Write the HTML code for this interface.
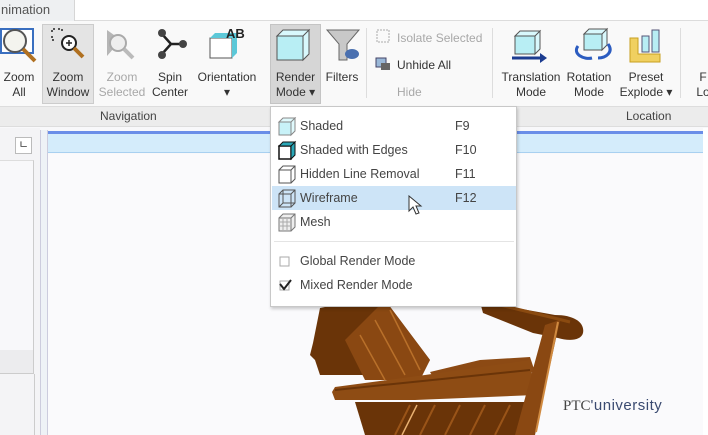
<!DOCTYPE html>
<html><head><meta charset="utf-8"><style>
*{margin:0;padding:0;box-sizing:border-box}
body{width:708px;height:435px;overflow:hidden;background:#f8f8fa;font-family:"Liberation Sans",sans-serif;font-size:12px;color:#333;position:relative}
.a{position:absolute}
.lbl{position:absolute;text-align:center;font-size:12px;line-height:15px;color:#333}
.dis{color:#a8a8a8}
.mi{position:absolute;left:0;width:246px;height:24px;font-size:12.5px;line-height:24px;color:#444}
.mi .t{position:absolute;left:29px}
.mi .k{position:absolute;left:184px}
</style></head><body>
<div class="a" style="left:0;top:0;width:708px;height:21px;background:#fff;border-bottom:1px solid #dcdcdc"></div>
<div class="a" style="left:0;top:0;width:75px;height:21px;background:#eef0f2;border-right:1px solid #d6d6d6;font-size:13px;line-height:19px;padding-left:1px;color:#555">nimation</div>
<div class="a" style="left:0;top:21px;width:708px;height:86px;background:#f9f9f9"></div>
<div class="a" style="left:0;top:106px;width:708px;height:21px;background:#ececec;border-top:1px solid #ddd;border-bottom:1px solid #ddd"></div>
<div class="a" style="left:100px;top:109px;font-size:12px;color:#444">Navigation</div>
<div class="a" style="left:626px;top:109px;font-size:12px;color:#444">Location</div>
<div class="a" style="left:42px;top:24px;width:52px;height:80px;background:#e4e4e4;border:1px solid #ccc"></div>
<div class="a" style="left:270px;top:24px;width:51px;height:80px;background:#d6d6d6;border:1px solid #c4c4c4"></div>
<div class="a" style="left:366px;top:28px;width:1px;height:70px;background:#ddd"></div>
<div class="a" style="left:492px;top:28px;width:1px;height:70px;background:#ddd"></div>
<div class="a" style="left:680px;top:28px;width:1px;height:70px;background:#ddd"></div>
<svg class="a" style="left:0;top:24px" width="708" height="46">
 <rect x="1" y="5" width="32" height="24" fill="#fff" stroke="#3a6fc0" stroke-width="2"/>
 <circle cx="15" cy="17" r="11" fill="#f4f4ee" stroke="#555" stroke-width="2"/><line x1="23" y1="25" x2="35" y2="37" stroke="#b07020" stroke-width="4"/>
 <path d="M52 8v-3h4M58 5h4v3M52 12v4h4" stroke="#222" fill="none" stroke-width="1.5" stroke-dasharray="2 2"/>
 <circle cx="69" cy="19" r="7" fill="#fff" stroke="#222" stroke-width="2"/><path d="M66 19h6M69 16v6" stroke="#222" stroke-width="1.5"/><line x1="74" y1="24" x2="83" y2="33" stroke="#b07020" stroke-width="4"/>
 <path d="M107 6l14 10-14 16z" fill="#888" opacity=".6"/><circle cx="118" cy="19" r="8" fill="#eee" stroke="#aaa" stroke-width="2"/><line x1="124" y1="25" x2="133" y2="34" stroke="#bbb" stroke-width="4"/>
 <path d="M162 10l9 10l-9 10M171 20h10" stroke="#222" stroke-width="2.5" fill="none"/><circle cx="162" cy="9" r="4" fill="#444"/><circle cx="162" cy="31" r="4" fill="#444"/><circle cx="183" cy="20" r="4" fill="#444"/>
 <path d="M210 14h22v20h-22z" fill="#fff" stroke="#555"/><path d="M210 14l5-5h22l-5 5zM232 14l5-5v20l-5 5z" fill="#5cc8d8"/>
 <text x="226" y="14" font-size="13" font-family="Liberation Sans" font-weight="bold" fill="#222">AB</text>
 <path d="M277 12h26v24h-26z" fill="#b8eef4" stroke="#555"/><path d="M277 12l6-6h26l-6 6zM303 12l6-6v24l-6 6z" fill="#d8f8fc" stroke="#555"/>
 <path d="M327 6h32l-12 14v16h-8v-16z" fill="#c8c8c8" stroke="#666"/><ellipse cx="352" cy="30" rx="7" ry="5" fill="#4a70b0"/>
 <path d="M515 12h20v18h-20z" fill="#b8eef4" stroke="#555"/><path d="M515 12l5-5h20l-5 5zM535 12l5-5v18l-5 5z" fill="#d8f8fc" stroke="#555"/>
 <path d="M512 34h30" stroke="#1c3c90" stroke-width="3"/><path d="M540 29l7 5-7 5z" fill="#1c3c90"/>
 <path d="M584 10h18v16h-18z" fill="#b8eef4" stroke="#555"/><path d="M584 10l5-5h18l-5 5zM602 10l5-5v16l-5 5z" fill="#d8f8fc" stroke="#555"/>
 <path d="M578 22c-6 8 6 14 14 12M608 20c6 8-2 14-10 14" stroke="#2c5cc0" stroke-width="3" fill="none"/>
 <path d="M630 14h8v16h22v8h-30z" fill="#f0d060" stroke="#c8a020"/><rect x="642" y="12" width="7" height="16" fill="#b8eef4" stroke="#557"/><rect x="652" y="6" width="7" height="22" fill="#b8eef4" stroke="#557"/>
 <rect x="377" y="6" width="12" height="12" fill="none" stroke="#aaa" stroke-dasharray="2 1"/>
</svg>
<svg class="a" style="left:375px;top:57px" width="16" height="14"><rect x="1" y="1" width="10" height="9" fill="#9ab8d8" stroke="#446"/><rect x="6" y="6" width="9" height="7" fill="#666"/></svg>
<div class="a dis" style="left:397px;top:31px;font-size:12px">Isolate Selected</div>
<div class="a" style="left:397px;top:58px;font-size:12px;color:#333">Unhide All</div>
<div class="a dis" style="left:397px;top:85px;font-size:12px">Hide</div>
<div class="lbl" style="left:0;top:70px;width:38px">Zoom<br>All</div>
<div class="lbl" style="left:43px;top:70px;width:50px">Zoom<br>Window</div>
<div class="lbl dis" style="left:96px;top:70px;width:52px">Zoom<br>Selected</div>
<div class="lbl" style="left:148px;top:70px;width:44px">Spin<br>Center</div>
<div class="lbl" style="left:194px;top:70px;width:66px">Orientation<br>▾</div>
<div class="lbl" style="left:270px;top:70px;width:51px">Render<br>Mode ▾</div>
<div class="lbl" style="left:322px;top:70px;width:40px">Filters</div>
<div class="lbl" style="left:496px;top:70px;width:70px">Translation<br>Mode</div>
<div class="lbl" style="left:564px;top:70px;width:50px">Rotation<br>Mode</div>
<div class="lbl" style="left:614px;top:70px;width:64px">Preset<br>Explode ▾</div>
<div class="lbl" style="left:688px;top:70px;width:30px">F<br>Lo</div>
<div class="a" style="left:0;top:128px;width:40px;height:307px;background:#f4f4f6"></div>
<div class="a" style="left:15px;top:137px;width:17px;height:17px;border:1px solid #bbb;background:#fff;font-size:11px;line-height:15px;text-align:center">ㄴ</div>
<div class="a" style="left:0;top:160px;width:34px;height:190px;border-right:1px solid #ccc;border-top:1px solid #ddd;background:#f8f8fa"></div>
<div class="a" style="left:0;top:350px;width:34px;height:24px;background:#ececee;border-right:1px solid #ccc;border-bottom:1px solid #ccc"></div>
<div class="a" style="left:34px;top:374px;width:1px;height:61px;background:#ccc"></div>
<div class="a" style="left:40px;top:130px;width:8px;height:305px;background:#eef2f6;border-left:1px solid #ccd;border-right:1px solid #ccd"></div>
<div class="a" style="left:48px;top:131px;width:655px;height:3px;background:#6a8ee8"></div>
<div class="a" style="left:48px;top:134px;width:655px;height:19px;background:#d4ecfb;border-bottom:1px solid #a8d0f0"></div>
<div class="a" style="left:48px;top:154px;width:655px;height:281px;background:#fafafc"></div>
<div class="a" style="left:703px;top:128px;width:5px;height:307px;background:#fff"></div>
<!-- chair -->
<svg class="a" style="left:300px;top:290px" width="300" height="145">
 <path d="M20 18l20-4 45 -4 45 60 -10 15 -100 0 -5-15 -5-5 3-12z" fill="#6a3408"/>
 <path d="M45 50l40-40 45 60-10 20-55 0z" fill="#8a4812"/>
 <path d="M60 45l25 45M75 30l30 55M90 20l30 60" stroke="#b8702a" stroke-width="1.5"/>
 <path d="M180 12l20 3 55 10c20 0 30 8 28 18-2 8-15 8-25 5l-25-5-50-20z" fill="#6a3408"/>
 <path d="M200 15l50 12 20 5" stroke="#8a4a10" stroke-width="3"/>
 <path d="M130 82l50-12 50-3 5 15-100 8z" fill="#8c4a14"/>
 <path d="M35 97l90-12 105-15 5 35-120 5-80 0-3-8z" fill="#8e4c14"/>
 <path d="M35 100l195-20" stroke="#6a3408" stroke-width="2"/>
 <path d="M55 112h180l-5 33H65z" fill="#6a3408"/>
 <path d="M110 115l-15 30M135 115l-15 30M160 115l-15 30M185 115l-15 30M210 115l-15 30" stroke="#9a5418" stroke-width="2"/>
 <path d="M117 115l-15 30" stroke="#e8b070" stroke-width="1.5"/>
 <path d="M245 35l15-5-25 115h-20z" fill="#8a4812"/>
 <path d="M258 32l-22 110" stroke="#d08a40" stroke-width="2"/>
</svg>
<div class="a" style="left:563px;top:397px;font-size:15px;color:#444;font-family:'Liberation Serif',serif">PTC<span style="font-family:'Liberation Sans',sans-serif;color:#3a4a70;letter-spacing:.5px">'university</span></div>
<div class="a" style="left:270px;top:106px;width:247px;height:201px;background:#fff;border:1px solid #c8c8c8;box-shadow:1px 2px 3px rgba(0,0,0,.2)">
 <div class="mi" style="top:7px"><span class="t">Shaded</span><span class="k">F9</span></div>
 <div class="mi" style="top:31px"><span class="t">Shaded with Edges</span><span class="k">F10</span></div>
 <div class="mi" style="top:55px"><span class="t">Hidden Line Removal</span><span class="k">F11</span></div>
 <div class="mi" style="top:79px;left:1px;width:244px;background:#cde4f7"><span class="t" style="left:28px">Wireframe</span><span class="k" style="left:183px">F12</span></div>
 <div class="mi" style="top:103px"><span class="t">Mesh</span></div>
 <div class="a" style="left:3px;top:134px;width:240px;height:1px;background:#e4e4e4"></div>
 <div class="mi" style="top:142px"><span class="t">Global Render Mode</span></div>
 <div class="mi" style="top:166px"><span class="t">Mixed Render Mode</span></div>
 <svg class="a" style="left:6px;top:10px" width="24" height="190">
  <path d="M2 5h12v13H2z" fill="#c8f2f8" stroke="#888"/><path d="M2 5l4-4h12l-4 4zM14 5l4-4v13l-4 4z" fill="#e0fafd" stroke="#888"/>
  <path d="M2 29h12v13H2z" fill="#fff" stroke="#111" stroke-width="1.5"/><path d="M2 29l4-4h12l-4 4zM14 29l4-4v13l-4 4z" fill="#2aa8b8" stroke="#111"/>
  <path d="M2 53h12v13H2zM2 53l4-4h12v13l-4 4M14 53l4-4" fill="none" stroke="#555"/>
  <path d="M2 77h12v13H2zM2 77l4-4h12v13l-4 4M14 77l4-4M6 73v13h12M6 86l-4 4" fill="none" stroke="#555"/>
  <path d="M2 101h12v13H2zM2 101l4-4h12v13l-4 4M14 101l4-4" fill="#eee" stroke="#777"/><path d="M3 105h10M3 109h10M6 102v11M10 102v11" stroke="#aaa"/>
  <rect x="3" y="140" width="9" height="9" fill="#fff" stroke="#aaa"/>
  <rect x="3" y="164" width="9" height="9" fill="#fff" stroke="#aaa"/><path d="M3 167l4 5 7-9" stroke="#222" stroke-width="2" fill="none"/>
 </svg>
</div>
<svg class="a" style="left:408px;top:195px" width="16" height="22"><path d="M1 1v15l4-4 3 7 3-1-3-7h5z" fill="#fff" stroke="#333"/></svg>
</body></html>
